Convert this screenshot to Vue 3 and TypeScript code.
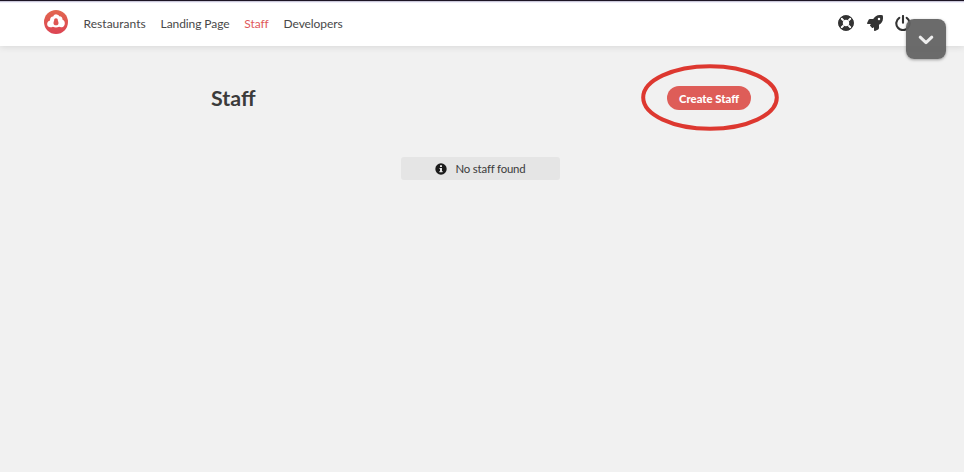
<script setup lang="ts">
import { ref } from 'vue'

interface NavItem {
  label: string
  active?: boolean
}

const items = ref<NavItem[]>([
  { label: 'Restaurants' },
  { label: 'Landing Page' },
  { label: 'Staff', active: true },
  { label: 'Developers' },
])
</script>

<template>
  <div class="page">
    <header class="topbar">
      <svg class="logo" viewBox="0 0 24 24">
        <defs>
          <linearGradient id="logo-fill" x1="0" y1="0" x2="0" y2="1">
            <stop offset="0" stop-color="#e2674f" />
            <stop offset="1" stop-color="#dc4453" />
          </linearGradient>
        </defs>
        <circle cx="12" cy="12" r="12" fill="url(#logo-fill)" />
        <path
          d="M6 17.3C3.9 17 2.9 15.4 3.2 13.5c.2-1.7 1.3-2.7 2.8-3.1C6 8 7.4 6.3 9.2 6.5c.7-1.6 1.9-2.3 3.3-2.1 1.4.1 2.3.8 2.7 1.8 2-.2 3.6 1.4 3.2 3.4 1.6.8 2.5 2.1 2.4 3.9-.1 2-1.2 3.6-3 3.8-1.2.2-2-.2-2.7-.5-2 .9-4.300.9-6.200 0-.8.4-1.800.6-2.900.5Z"
          fill="#fff"
        />
        <path d="M12 8.200c1.200 0 1.800.8 1.800 1.800 0 1.100.6 1.600.7 2.900.1 1.600-.9 2.400-2.500 2.400s-2.600-.8-2.500-2.400c.1-1.300.7-1.800.7-2.900 0-1 .6-1.800 1.800-1.800Z" fill="#df5552" />
      </svg>
      <nav class="nav">
        <a v-for="item in items" :key="item.label" :class="['link', { active: item.active }]">{{ item.label }}</a>
      </nav>
      <div class="actions">
        <svg viewBox="0 0 16 16">
          <circle cx="8" cy="8" r="5.5" fill="none" stroke="#333" stroke-width="4.6" />
          <path d="M3 3l2.6 2.6M13 3l-2.6 2.6M3 13l2.6-2.6M13 13l-2.6-2.6" stroke="#fff" stroke-width="1.9" />
          <circle cx="8" cy="8" r="7.3" fill="none" stroke="#333" stroke-width="1" />
        </svg>
        <svg viewBox="0 0 512 512">
          <path
            fill="#333"
            d="M505.12 19.09c-1.19-5.53-6.66-11-12.21-12.18C460.65 0 435.46 0 410.36 0c-103.2 0-165.1 55.2-211.29 128H94.87c-16.35.02-35.56 11.88-42.87 26.48L2.52 253.29A28.4 28.4 0 0 0 0 264a24 24 0 0 0 24 24h103.84l-22.47 22.47c-11.37 11.37-12.96 32.25 0 45.25l50.92 50.91c11.15 11.19 32.15 13.16 45.27 0L224 384.16V488a24 24 0 0 0 24 24 28.6 28.6 0 0 0 10.7-2.52l98.72-49.39c14.63-7.3 26.5-26.5 26.5-42.86V312.8c72.59-46.3 128.03-108.4 128.03-211.1.08-25.2.08-50.4-6.83-82.61ZM384.04 168a40 40 0 1 1 0-80 40 40 0 0 1 0 80Z"
          />
        </svg>
        <svg class="power" viewBox="0 0 16 16">
          <path d="M4.3 2.8A6.7 6.7 0 1 0 11.7 2.8M8 1v6.8" fill="none" stroke="#333" stroke-width="2.1" stroke-linecap="round" />
        </svg>
      </div>
    </header>

    <main class="content">
      <div class="heading">
        <h1>Staff</h1>
        <div class="create-wrap">
          <button class="create">Create Staff</button>
          <svg class="ring" viewBox="0 0 138 67">
            <ellipse cx="69" cy="33.5" rx="66.8" ry="31.3" fill="none" stroke="#dd3830" stroke-width="4" />
          </svg>
        </div>
      </div>
      <div class="notice">
        <svg viewBox="0 0 12 12">
          <circle cx="6" cy="6" r="5.7" fill="#1c1c1c" />
          <path d="M5 2.2h2v1.700H5zM4.500 4.900H7v3.200h.6v1.200H4.400V8.100H5V6h-.5z" fill="#e5e5e5" />
        </svg>
        <span>No staff found</span>
      </div>
    </main>

    <button class="toggle">
      <svg viewBox="0 0 16 10"><path d="M2.2 2.2L8 7.7l5.8-5.5" fill="none" stroke="#eee" stroke-width="3" stroke-linecap="round" stroke-linejoin="round" /></svg>
    </button>
  </div>
</template>

<style>
body {
  background: #f1f1f1;
}
</style>

<style scoped>
.page {
  position: relative;
  box-sizing: border-box;
  height: 472px;
  overflow: hidden;
  background: #f1f1f1;
  color: #3b3b3b;
  font-family: Lato, sans-serif;
}
.topbar {
  box-sizing: border-box;
  display: flex;
  align-items: center;
  height: 46px;
  padding: 0 53px 0 44px;
  border-top: 1px solid #1c1424;
  background: #fff;
  box-shadow: inset 0 1px #c9c7d8, inset 0 2px #f0effa, 0 1px 7px rgba(0, 0, 0, 0.11);
}
.logo {
  width: 24px;
  height: 24px;
  margin-top: -3px;
}
.nav {
  display: flex;
  gap: 14.8px;
  margin-left: 15.600px;
  font-size: 12px;
  line-height: 16px;
  letter-spacing: -0.08px;
}
.link {
  color: #484848;
}
.link:first-child {
  letter-spacing: 0.02px;
}
.link.active {
  color: #e0595b;
}
.actions {
  display: flex;
  gap: 13px;
  margin: -2px -1px 0 auto;
}
.actions svg {
  width: 16px;
  height: 16px;
}
.actions .power {
  margin-left: -1px;
  margin-right: 1px;
}
.heading {
  display: flex;
  align-items: center;
  justify-content: space-between;
  height: 24px;
  padding: 40px 213px 0 211px;
}
h1 {
  margin: 0;
  font-size: 21.4px;
  line-height: 24px;
  font-weight: 700;
}
.create-wrap {
  position: relative;
}
.create {
  display: block;
  width: 84px;
  height: 24px;
  padding: 1px 0 0;
  border: 0;
  border-radius: 12px;
  background: #de5d58;
  color: #fff;
  font: 900 11.3px/20px Lato, sans-serif;
}
.ring {
  position: absolute;
  top: -22px;
  left: -26px;
  width: 138px;
  height: 67px;
}
.notice {
  display: flex;
  align-items: center;
  justify-content: center;
  gap: 8px;
  width: 159px;
  height: 23px;
  margin: 47px 0 0 401px;
  border-radius: 3px;
  background: #e5e5e5;
  font-size: 11.4px;
  letter-spacing: -0.18px;
}
.notice svg {
  width: 12px;
  height: 12px;
}
.toggle {
  position: absolute;
  top: 19px;
  left: 906px;
  display: flex;
  align-items: center;
  justify-content: center;
  width: 40px;
  height: 40px;
  padding: 2px 0 0;
  border: 0;
  border-radius: 8px;
  background: rgba(98, 98, 98, 0.94);
  box-shadow: 0 1px 3px rgba(0, 0, 0, 0.35);
}
.toggle svg {
  width: 16px;
  height: 10px;
}
</style>
